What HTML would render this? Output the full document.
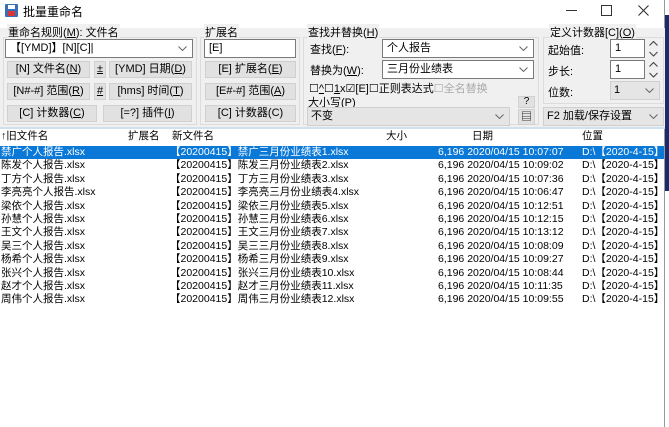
<!DOCTYPE html>
<html><head><meta charset="utf-8"><style>
*{box-sizing:border-box;margin:0;padding:0}
body{width:669px;height:427px;overflow:hidden;background:#fff;font-family:"Liberation Sans","Noto Sans CJK SC",sans-serif;font-size:11px;color:#000;position:relative}
.a{position:absolute;white-space:nowrap}
.tb{position:absolute;left:0;top:28px;width:665px;height:100px;background:#f0f0f0}
.gb{position:absolute;border:1px solid #dcdcdc}
.btn{position:absolute;background:#e1e1e1;border:1px solid #d0d0d0;height:17px;line-height:15px;text-align:center;font-size:11px}
.in{position:absolute;background:#fff;border:1px solid #7a7a7a;height:19px;line-height:17px;padding-left:4px}
.dd{position:absolute;background:#e5e5e5;border:1px solid #cfcfcf;height:19px;line-height:17px;padding-left:3px}
.chev{position:absolute;right:5px;top:6px;width:9px;height:5px}
u{text-decoration:underline}
.row{position:absolute;left:0;width:664px;height:13.4px;line-height:13.4px;font-size:10.5px}
.row span{position:absolute;white-space:nowrap}
.sel{background:#0a78d7;color:#fff}
</style></head><body>
<svg width="0" height="0" style="position:absolute"><defs><symbol id="cv" viewBox="0 0 9 5"><path d="M0.5 0.5L4.5 4.5L8.5 0.5" fill="none" stroke="#666" stroke-width="1"/></symbol><symbol id="cu" viewBox="0 0 9 5"><path d="M0.5 4.5L4.5 0.5L8.5 4.5" fill="none" stroke="#444" stroke-width="1.2"/></symbol></defs></svg>
<div class="a" style="left:5px;top:4px;width:13px;height:13px;background:#3a6fb8;border-radius:1px"><div style="position:absolute;left:3px;top:1px;width:7px;height:4px;background:#fff"></div><div style="position:absolute;left:3px;top:7px;width:7px;height:5px;background:#d33"></div></div>
<div class="a" style="left:23px;top:3px;font-size:12px">批量重命名</div>
<div class="a" style="left:566px;top:10px;width:11px;height:1px;background:#333"></div>
<div class="a" style="left:601px;top:5px;width:11px;height:11px;border:1px solid #333"></div>
<svg class="a" style="left:638px;top:5px" width="11" height="11"><path d="M0.5 0.5L10.5 10.5M10.5 0.5L0.5 10.5" stroke="#333" stroke-width="1.1"/></svg>
<div class="a" style="left:665px;top:15px;width:4px;height:176px;background:#1b2a6b"></div>
<div class="a" style="left:664px;top:0;width:1px;height:427px;background:#999"></div>

<div class="tb"></div>
<div class="a" style="left:0;top:127px;width:665px;height:2px;background:#cfe0ee"></div>
<div class="gb" style="left:3px;top:37px;width:194px;height:88px"></div>
<div class="a" style="left:7px;top:24px;background:#f0f0f0;padding:0 1px">重命名规则(<u>M</u>): 文件名</div>
<div class="in" style="left:5px;top:39px;width:188px">【[YMD]】[N][C]|<svg class="chev"><use href="#cv"/></svg></div>
<div class="btn" style="left:7px;top:61px;width:83px">[N] 文件名(<u>N</u>)</div>
<div class="btn" style="left:94px;top:61px;width:12px"><u>±</u></div>
<div class="btn" style="left:109px;top:61px;width:83px">[YMD] 日期(<u>D</u>)</div>
<div class="btn" style="left:7px;top:83px;width:83px">[N#-#] 范围(<u>R</u>)</div>
<div class="btn" style="left:94px;top:83px;width:12px"><u>#</u></div>
<div class="btn" style="left:109px;top:83px;width:83px">[hms] 时间(<u>T</u>)</div>
<div class="btn" style="left:7px;top:105px;width:90px">[C] 计数器(<u>C</u>)</div>
<div class="btn" style="left:103px;top:105px;width:89px">[=?] 插件(<u>I</u>)</div>
<div class="gb" style="left:200px;top:37px;width:100px;height:88px"></div>
<div class="a" style="left:204px;top:24px;background:#f0f0f0;padding:0 1px">扩展名</div>
<div class="in" style="left:204px;top:39px;width:92px">[E]</div>
<div class="btn" style="left:205px;top:61px;width:91px">[E] 扩展名(<u>E</u>)</div>
<div class="btn" style="left:205px;top:83px;width:91px">[E#-#] 范围(<u>A</u>)</div>
<div class="btn" style="left:205px;top:105px;width:91px">[C] 计数器(C)</div>
<div class="gb" style="left:303px;top:37px;width:236px;height:88px"></div>
<div class="a" style="left:307px;top:24px;background:#f0f0f0;padding:0 1px">查找并替换(<u>H</u>)</div>
<div class="a" style="left:310px;top:41px">查找(<u>F</u>):</div>
<div class="in" style="left:382px;top:39px;width:152px">个人报告<svg class="chev"><use href="#cv"/></svg></div>
<div class="a" style="left:310px;top:62px">替换为(<u>W</u>):</div>
<div class="in" style="left:382px;top:60px;width:152px">三月份业绩表<svg class="chev"><use href="#cv"/></svg></div>
<div class="a" style="left:309px;top:80px">☐<u>^</u>☐<u>1</u>x☑[E]☐正则表达式<span style="color:#aaa">☐全名替换</span></div>
<div class="a" style="left:308px;top:94px">大小写(<u>P</u>)</div>
<div class="dd" style="left:307px;top:107px;width:203px">不变<svg class="chev"><use href="#cv"/></svg></div>
<div class="btn" style="left:518px;top:96px;width:17px;height:12px;line-height:10px;font-size:10px">?</div>
<div class="btn" style="left:518px;top:109px;width:17px;height:16px;font-size:11px">▤</div>
<div class="gb" style="left:543px;top:37px;width:121px;height:67px"></div>
<div class="a" style="left:549px;top:24px;background:#f0f0f0;padding:0 1px">定义计数器[C](<u>O</u>)</div>
<div class="a" style="left:548px;top:42px">起始值:</div>
<div class="in" style="left:610px;top:39px;width:35px">1</div>
<svg class="a" style="left:649px;top:41px" width="9" height="16"><path d="M0.5 4.5L4.5 0.5L8.5 4.5M0.5 11L4.5 15L8.5 11" fill="none" stroke="#444" stroke-width="1.1"/></svg>
<div class="a" style="left:548px;top:63px">步长:</div>
<div class="in" style="left:610px;top:60px;width:35px">1</div>
<svg class="a" style="left:649px;top:62px" width="9" height="16"><path d="M0.5 4.5L4.5 0.5L8.5 4.5M0.5 11L4.5 15L8.5 11" fill="none" stroke="#444" stroke-width="1.1"/></svg>
<div class="a" style="left:548px;top:84px">位数:</div>
<div class="dd" style="left:610px;top:81px;width:50px">1<svg class="chev"><use href="#cv"/></svg></div>
<div class="dd" style="left:543px;top:107px;width:121px;height:19px">F2 加载/保存设置<svg class="chev"><use href="#cv"/></svg></div>
<div class="row" style="top:130px">
<span style="left:1px">↑旧文件名</span><span style="left:128px">扩展名</span><span style="left:172px">新文件名</span><span style="left:386px">大小</span><span style="left:472px">日期</span><span style="left:582px">位置</span></div>
<div class="row sel" style="top:146px"><span style="left:1px">禁广个人报告.xlsx</span><span style="left:170px">【20200415】禁广三月份业绩表1.xlsx</span><span style="left:438px">6,196 2020/04/15 10:07:07</span><span style="left:582px">D:\【2020-4-15】</span></div>
<div class="row" style="top:159.4px"><span style="left:1px">陈发个人报告.xlsx</span><span style="left:170px">【20200415】陈发三月份业绩表2.xlsx</span><span style="left:438px">6,196 2020/04/15 10:09:02</span><span style="left:582px">D:\【2020-4-15】</span></div>
<div class="row" style="top:172.8px"><span style="left:1px">丁方个人报告.xlsx</span><span style="left:170px">【20200415】丁方三月份业绩表3.xlsx</span><span style="left:438px">6,196 2020/04/15 10:07:36</span><span style="left:582px">D:\【2020-4-15】</span></div>
<div class="row" style="top:186.2px"><span style="left:1px">李亮亮个人报告.xlsx</span><span style="left:170px">【20200415】李亮亮三月份业绩表4.xlsx</span><span style="left:438px">6,196 2020/04/15 10:06:47</span><span style="left:582px">D:\【2020-4-15】</span></div>
<div class="row" style="top:199.6px"><span style="left:1px">梁依个人报告.xlsx</span><span style="left:170px">【20200415】梁依三月份业绩表5.xlsx</span><span style="left:438px">6,196 2020/04/15 10:12:51</span><span style="left:582px">D:\【2020-4-15】</span></div>
<div class="row" style="top:213px"><span style="left:1px">孙慧个人报告.xlsx</span><span style="left:170px">【20200415】孙慧三月份业绩表6.xlsx</span><span style="left:438px">6,196 2020/04/15 10:12:15</span><span style="left:582px">D:\【2020-4-15】</span></div>
<div class="row" style="top:226.4px"><span style="left:1px">王文个人报告.xlsx</span><span style="left:170px">【20200415】王文三月份业绩表7.xlsx</span><span style="left:438px">6,196 2020/04/15 10:13:12</span><span style="left:582px">D:\【2020-4-15】</span></div>
<div class="row" style="top:239.8px"><span style="left:1px">吴三个人报告.xlsx</span><span style="left:170px">【20200415】吴三三月份业绩表8.xlsx</span><span style="left:438px">6,196 2020/04/15 10:08:09</span><span style="left:582px">D:\【2020-4-15】</span></div>
<div class="row" style="top:253.2px"><span style="left:1px">杨希个人报告.xlsx</span><span style="left:170px">【20200415】杨希三月份业绩表9.xlsx</span><span style="left:438px">6,196 2020/04/15 10:09:27</span><span style="left:582px">D:\【2020-4-15】</span></div>
<div class="row" style="top:266.6px"><span style="left:1px">张兴个人报告.xlsx</span><span style="left:170px">【20200415】张兴三月份业绩表10.xlsx</span><span style="left:438px">6,196 2020/04/15 10:08:44</span><span style="left:582px">D:\【2020-4-15】</span></div>
<div class="row" style="top:280px"><span style="left:1px">赵才个人报告.xlsx</span><span style="left:170px">【20200415】赵才三月份业绩表11.xlsx</span><span style="left:438px">6,196 2020/04/15 10:11:35</span><span style="left:582px">D:\【2020-4-15】</span></div>
<div class="row" style="top:293.4px"><span style="left:1px">周伟个人报告.xlsx</span><span style="left:170px">【20200415】周伟三月份业绩表12.xlsx</span><span style="left:438px">6,196 2020/04/15 10:09:55</span><span style="left:582px">D:\【2020-4-15】</span></div>
</body></html>
